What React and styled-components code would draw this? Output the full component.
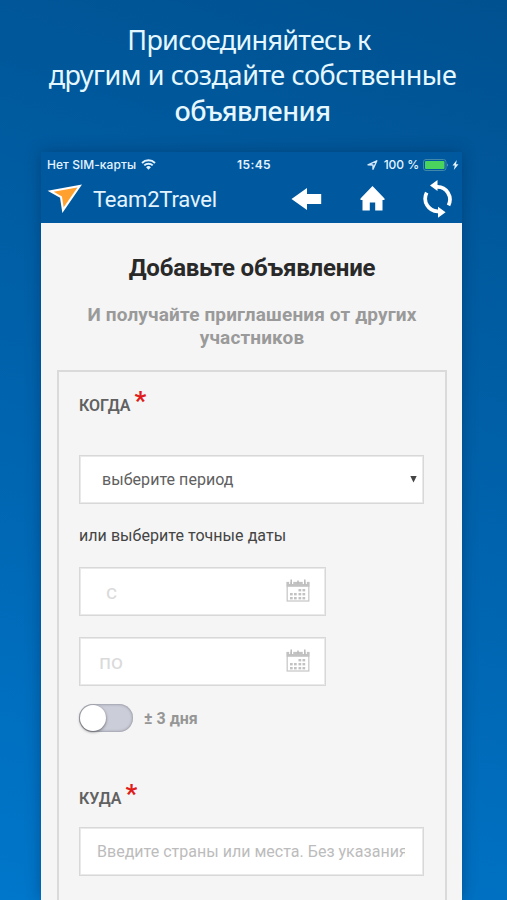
import React from "react";
import styled, { createGlobalStyle } from "styled-components";

const GlobalStyle = createGlobalStyle`
  *, *::before, *::after { box-sizing: border-box; }
  html, body { margin: 0; padding: 0; }
  body { font-family: Roboto, "Liberation Sans", sans-serif; overflow: hidden; }
`;

const Poster = styled.main`
  width: 507px;
  height: 900px;
  overflow: hidden;
  display: flex;
  flex-direction: column;
  align-items: center;
  background: linear-gradient(197deg, #005190 0%, #005a9e 25%, #0066b2 60%, #0077cb 100%);
`;

const Headline = styled.h1`
  margin: 0;
  height: 152px;
  padding-top: 22px;
  flex: none;
  display: flex;
  flex-direction: column;
  align-items: center;
  color: #e6f8ff;
  font: 400 27px/35.3px "Noto Sans", "Open Sans", sans-serif;
`;

const HeadlineLine = styled.span`
  white-space: nowrap;
  letter-spacing: ${(p) => p.$spacing || "0"};
  font-weight: ${(p) => p.$weight || 400};
  margin-left: ${(p) => p.$shift || "0"};
`;

const Phone = styled.section`
  width: 421px;
  height: 748px;
  margin-right: 4px;
  flex: none;
  display: flex;
  flex-direction: column;
  background: #f5f5f5;
  box-shadow: 0 0 14px rgba(0, 35, 75, 0.4);
`;

const TopArea = styled.header`
  height: 71px;
  flex: none;
  background: #00599f;
  color: #e4f4ff;
`;

const StatusBar = styled.div`
  height: 24px;
  padding: 1px 3px 0 6px;
  display: grid;
  grid-template-columns: 1fr auto 1fr;
  align-items: center;
  font: 500 12px/22px Inter, Roboto, sans-serif;
`;

const StatusGroup = styled.div`
  display: flex;
  align-items: center;
  white-space: nowrap;
  gap: ${(p) => p.$gap}px;
  justify-content: ${(p) => (p.$end ? "flex-end" : "flex-start")};
`;

const Carrier = styled.span`
  letter-spacing: 0.05px;
`;

const Percent = styled.span`
  margin: 0 1px 0 3px;
  letter-spacing: -0.05px;
`;

const Clock = styled.span`
  padding-left: 2px;
  font-weight: 600;
  letter-spacing: 0.4px;
`;

const NavBar = styled.nav`
  height: 46px;
  padding: 0 9px 0 6px;
  display: flex;
  align-items: center;
`;

const Brand = styled.span`
  margin-left: 10px;
  flex: 1;
  font-size: 22px;
  line-height: 30px;
  padding-top: 2px;
  letter-spacing: -0.2px;
`;

const NavIcons = styled.div`
  display: flex;
  align-items: center;
  gap: 38px;
`;

const Icon = styled.svg`
  display: block;
  flex: none;
`;

const Content = styled.div`
  padding: 0 15px 0 16px;
  display: flex;
  flex-direction: column;
`;

const Title = styled.h2`
  margin: 31px 0 0;
  height: 28px;
  text-align: center;
  font-size: 24px;
  font-weight: 700;
  line-height: 28px;
  letter-spacing: -0.2px;
  color: #292929;
`;

const Subtitle = styled.p`
  margin: 21px -5px 0;
  height: 46px;
  text-align: center;
  font-size: 19px;
  font-weight: 700;
  line-height: 23px;
  letter-spacing: 0.15px;
  color: #9a9a9a;
`;

const FormCard = styled.form`
  margin-top: 21px;
  height: 620px;
  padding: 0 21px 0 20px;
  border: 2px solid #dadada;
  display: flex;
  flex-direction: column;
  align-items: flex-start;
`;

const FieldLabel = styled.label`
  height: 32px;
  margin-top: ${(p) => p.$top}px;
  display: flex;
  align-items: flex-start;
  gap: 4px;
  font-size: 16px;
  font-weight: 600;
  line-height: 37px;
  color: #616161;
`;

const Required = styled.span`
  font-size: 26px;
  font-weight: 700;
  line-height: 28px;
  color: #e01b1b;
`;

const Field = styled.div`
  width: ${(p) => p.$width}px;
  height: 49px;
  margin-top: ${(p) => p.$top}px;
  padding: 0 ${(p) => p.$right}px 0 ${(p) => p.$left}px;
  flex: none;
  display: flex;
  align-items: center;
  justify-content: space-between;
  border: 1px solid #d8d8d8;
  box-shadow: inset 0 0 0 1px #e9e9e9;
  background: #fff;
`;

const FieldText = styled.span`
  overflow: hidden;
  white-space: nowrap;
  font-size: ${(p) => p.$size}px;
  letter-spacing: ${(p) => p.$spacing || "0"};
  line-height: 28px;
  color: ${(p) => p.$color};
`;

const Hint = styled.p`
  margin: 21px 0 0;
  height: 22px;
  font-size: 16px;
  line-height: 22px;
  letter-spacing: 0.05px;
  color: #444;
`;

const ToggleRow = styled.div`
  margin-top: 17px;
  height: 30px;
  display: flex;
  align-items: center;
  gap: 11px;
`;

const Switch = styled.span`
  width: 54px;
  height: 28px;
  padding: 1px;
  border-radius: 14px;
  background: #cbcdd8;
  box-shadow: inset 0 0 3px #777983;
`;

const Knob = styled.span`
  display: block;
  width: 26px;
  height: 26px;
  border-radius: 50%;
  background: #fff;
  box-shadow: 0 1px 3px rgba(0, 0, 0, 0.5);
`;

const ToggleText = styled.span`
  font-size: 16px;
  font-weight: 700;
  color: #969696;
`;

const CalendarSvg = styled(Icon)`
  margin-bottom: 3px;
`;

const Wifi = () => (
  <Icon width="15" height="11" viewBox="0 0 15 11" fill="none" stroke="#e4f4ff">
    <path d="M1 4a9.2 9.2 0 0 1 13 0M3.3 6.4a6 6 0 0 1 8.4 0" strokeWidth="1.9" />
    <path d="M5.1 8.2a3.4 3.4 0 0 1 4.8 0L7.5 10.8z" fill="#e4f4ff" stroke="none" />
  </Icon>
);

const LocationArrow = () => (
  <Icon width="11" height="10" viewBox="0 0 11 10">
    <path d="M1 4.8 9.8.8 6 9.2V5z" fill="none" stroke="#d5eaff" strokeWidth="1.4" strokeLinejoin="round" />
  </Icon>
);

const Battery = () => (
  <Icon width="26" height="12" viewBox="0 0 26 12">
    <rect x=".5" y=".5" width="22.5" height="11" rx="2.5" fill="none" stroke="#4288a8" />
    <rect x="2" y="2" width="19.5" height="8" rx="1" fill="#4bd45d" />
    <path d="M24.3 4.2q1.5 1.8 0 3.6z" fill="#8ebbd9" />
  </Icon>
);

const Bolt = () => (
  <Icon width="7" height="10" viewBox="0 0 7 10">
    <path d="M4.8 0 .5 5.6h2.3L1.8 10l4.7-5.8H4z" fill="#e4f4ff" />
  </Icon>
);

const Logo = () => (
  <Icon width="36" height="30" viewBox="0 0 36 30">
    <path d="M3.6 7.2 32.7 2 16 26.2 14 13.2z" fill="#ffa02f" stroke="#fff" strokeWidth="2.1" strokeMiterlimit="8" />
  </Icon>
);

const BackArrow = () => (
  <Icon width="31" height="24" viewBox="0 0 31 24">
    <path d="M.5 12 16 1v6h14.200v10H16v6z" fill="#fff" />
  </Icon>
);

const HomeIcon = () => (
  <Icon width="25" height="26" viewBox="0 0 25 26">
    <path d="M12.5 0 24.5 12.5V14h-2v10.500h-7.300v-8h-5.400v8H2.500V14h-2v-1.500z" fill="#fff" />
  </Icon>
);

const SyncIcon = () => (
  <Icon width="30" height="38" viewBox="0 0 30 38">
    <path
      d="M14 6.8A12.4 12.7 0 0 1 25.5 25.3M3.7 12.7A12.4 12.7 0 0 0 15 31.3"
      fill="none"
      stroke="#fff"
      strokeWidth="3.7"
    />
    <path d="M7 5.500 14.500 0v11zM22.600 32.300 15 26.800v11z" fill="#fff" />
  </Icon>
);

const CalendarIcon = () => (
  <CalendarSvg width="24" height="23" viewBox="0 0 24 23">
    <rect x="1.2" y="3.5" width="21.6" height="18.5" fill="#fff" stroke="#c9c9c9" strokeWidth="1.3" />
    <path d="M.6 3h22.8v4.8H.6z" fill="#c2c2c2" />
    <path d="M3.8 0v5M6.6 0v5M17.4 0v5M20.2 0v5" stroke="#fff" strokeWidth="1.3" />
    <path d="M5.2.5v5M18.8.5v5M12 1.500v3" stroke="#b9b9b9" strokeWidth="1.5" />
    <g fill="#c2c2c2">
      {[10, 14, 18].map((y, row) =>
        [4, 8, 12.5, 16.5].map((x, col) =>
          row === 0 && col < 2 ? null : <rect key={`${x}-${y}`} x={x} y={y} width="2.7" height="2.4" />
        )
      )}
    </g>
  </CalendarSvg>
);

const Caret = () => (
  <Icon width="7" height="7" viewBox="0 0 7 7">
    <path d="M.3 0h6.4L3.5 6.5z" fill="#444" />
  </Icon>
);

export default function App() {
  return (
    <>
      <GlobalStyle />
      <Poster>
        <Headline>
          <HeadlineLine $shift="-9px" $spacing="-0.7px">Присоединяйтесь к</HeadlineLine>
          <HeadlineLine $shift="-2px" $spacing="-0.43px">другим и создайте собственные</HeadlineLine>
          <HeadlineLine $shift="-2px" $weight={500} $spacing="-0.55px">объявления</HeadlineLine>
        </Headline>
        <Phone>
          <TopArea>
            <StatusBar>
              <StatusGroup $gap={5}>
                <Carrier>Нет SIM-карты</Carrier>
                <Wifi />
              </StatusGroup>
              <Clock>15:45</Clock>
              <StatusGroup $gap={3} $end>
                <LocationArrow />
                <Percent>100 %</Percent>
                <Battery />
                <Bolt />
              </StatusGroup>
            </StatusBar>
            <NavBar>
              <Logo />
              <Brand>Team2Travel</Brand>
              <NavIcons>
                <BackArrow />
                <HomeIcon />
                <SyncIcon />
              </NavIcons>
            </NavBar>
          </TopArea>
          <Content>
            <Title>Добавьте объявление</Title>
            <Subtitle>
              И получайте приглашения от других
              <br />
              участников
            </Subtitle>
            <FormCard>
              <FieldLabel $top={15}>
                КОГДА<Required>*</Required>
              </FieldLabel>
              <Field $width={345} $top={36} $left={22} $right={6}>
                <FieldText $size={16} $spacing="0.05px" $color="#606060">выберите период</FieldText>
                <Caret />
              </Field>
              <Hint>или выберите точные даты</Hint>
              <Field $width={247} $top={20} $left={26} $right={15}>
                <FieldText $size={21} $color="#dadada">с</FieldText>
                <CalendarIcon />
              </Field>
              <Field $width={247} $top={21} $left={19} $right={15}>
                <FieldText $size={21} $color="#dadada">по</FieldText>
                <CalendarIcon />
              </Field>
              <ToggleRow>
                <Switch>
                  <Knob />
                </Switch>
                <ToggleText>± 3 дня</ToggleText>
              </ToggleRow>
              <FieldLabel $top={47}>
                КУДА<Required>*</Required>
              </FieldLabel>
              <Field $width={345} $top={15} $left={17} $right={18}>
                <FieldText $size={16} $spacing="0.02px" $color="#bcbcbc">Введите страны или места. Без указания</FieldText>
              </Field>
            </FormCard>
          </Content>
        </Phone>
      </Poster>
    </>
  );
}
